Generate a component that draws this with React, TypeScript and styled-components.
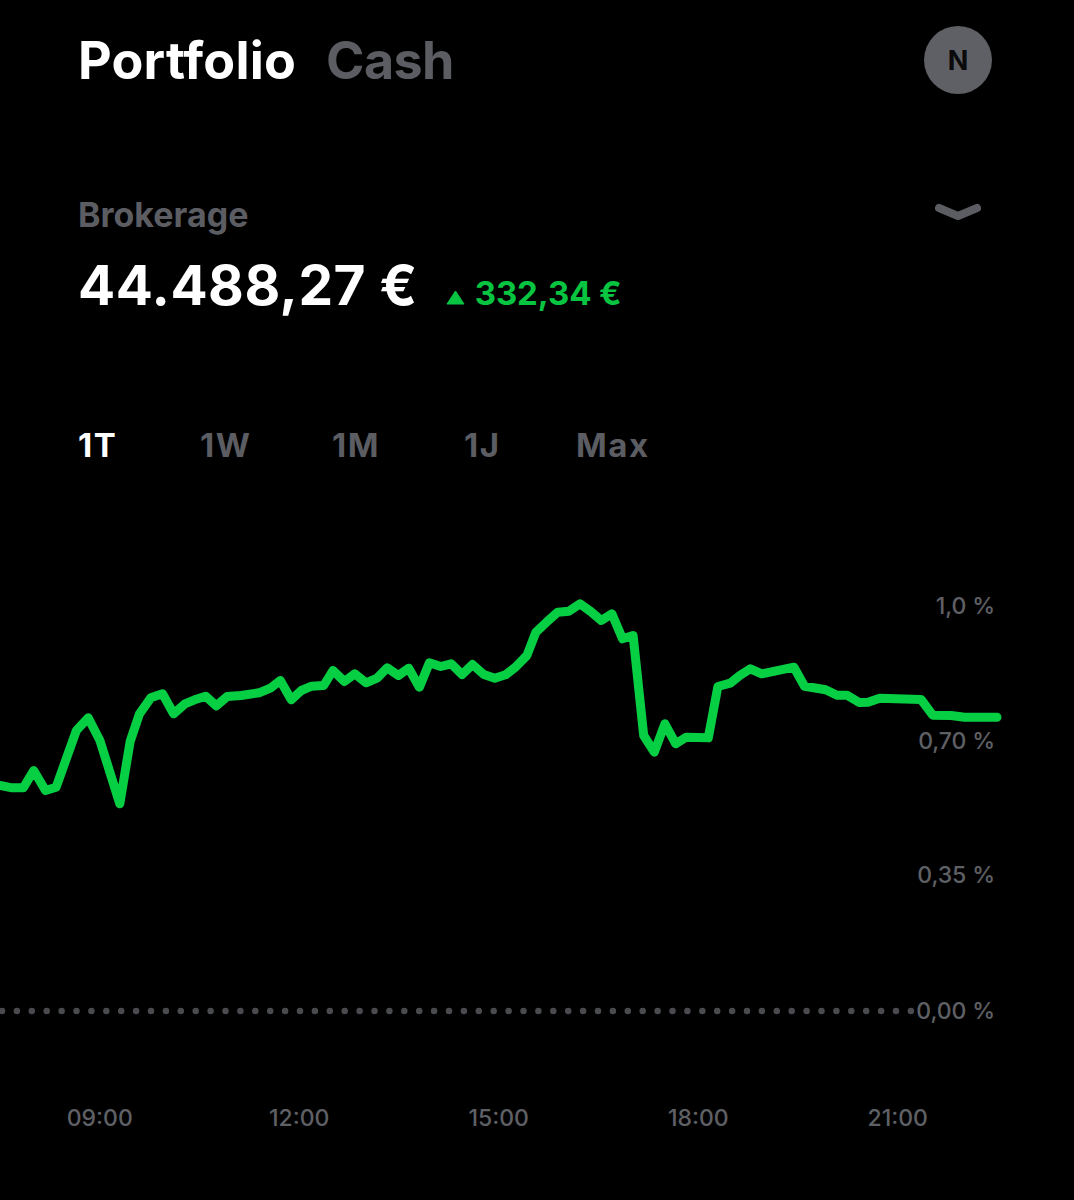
import React from "react";
import styled, { createGlobalStyle } from "styled-components";

const Global = createGlobalStyle`
  html, body { margin: 0; padding: 0; background: #000; }
  body { font-family: Inter, "Liberation Sans", sans-serif; }
`;

const Page = styled.div`
  width: 1074px;
  height: 1200px;
  background: #000;
  overflow: hidden;
  display: flex;
  flex-direction: column;
`;
const Header = styled.header`
  display: flex;
  align-items: center;
  justify-content: space-between;
  padding: 26px 82px 0 78px;
  height: 68px;
`;
const Tabs = styled.nav`
  display: flex;
  gap: 30px;
  align-items: center;
`;
const Tab = styled.span<{ $active?: boolean }>`
  font-size: 52px;
  font-weight: 700;
  letter-spacing: ${(p) => (p.$active ? "0.2px" : "-0.6px")};
  color: ${(p) => (p.$active ? "#fff" : "#5b5d63")};
`;
const Avatar = styled.div`
  width: 68px;
  height: 68px;
  border-radius: 50%;
  background: #5f6065;
  color: #0a0a0c;
  display: flex;
  align-items: center;
  justify-content: center;
  font-size: 27px;
  font-weight: 700;
`;
const Account = styled.section`
  margin-top: 102px;
  padding: 0 82px 0 78px;
`;
const AccountTop = styled.div`
  display: flex;
  justify-content: space-between;
  align-items: flex-start;
  height: 38px;
`;
const AccountName = styled.span`
  font-size: 34px;
  font-weight: 700;
  line-height: 38px;
  color: #5b5d63;
`;
const Chevron = styled.svg`
  width: 46px;
  height: 20px;
  margin-right: 11px;
  margin-top: 7px;
`;
const ValueRow = styled.div`
  display: flex;
  align-items: baseline;
  margin-top: 18px;
`;
const Value = styled.span`
  font-size: 55px;
  font-weight: 700;
  color: #fff;
  letter-spacing: 0.5px;
`;
const Delta = styled.span`
  margin-left: 28px;
  display: inline-flex;
  align-items: baseline;
  gap: 10px;
  font-size: 33px;
  font-weight: 700;
  letter-spacing: -0.1px;
  color: #07c541;
`;
const Triangle = styled.svg`
  width: 19px;
  height: 15px;
`;
const Ranges = styled.div`
  margin-top: 108px;
  padding-left: 78px;
  display: grid;
  grid-template-columns: 122px 132px 132px 112px auto;
`;
const Range = styled.span<{ $active?: boolean }>`
  font-size: 33px;
  font-weight: 700;
  line-height: 38px;
  letter-spacing: 1.5px;
  color: ${(p) => (p.$active ? "#fff" : "#5b5d63")};
`;
const Chart = styled.div`
  position: relative;
  margin-top: 107px;
  height: 490px;
`;
const Plot = styled.svg`
  position: absolute;
  inset: 0;
  width: 1074px;
  height: 490px;
`;
const AxisLabel = styled.span<{ $top: number }>`
  position: absolute;
  right: 79px;
  top: ${(p) => p.$top}px;
  font-size: 23px;
  font-weight: 500;
  letter-spacing: -0.1px;
  line-height: 28px;
  color: #5f6065;
  background: ${(p) => (p.$top > 400 ? "#000" : "transparent")};
`;
const TimeAxis = styled.div`
  display: grid;
  grid-template-columns: repeat(5, 199.5px);
  margin-top: 43px;
`;
const TimeLabel = styled.span`
  text-align: center;
  font-size: 23px;
  font-weight: 500;
  line-height: 28px;
  color: #5f6065;
`;

const left: [number, number][] = [
  [0,615],[35,622],[68,622],[98,570],[132,630],[163,620],[222,450],[256,412],[290,480],[348,670],[378,482],[405,400],[438,352],[472,340],[504,400],[537,370],[565,358],[597,347],[628,376],[660,348],[700,345],[752,337],[785,323],[814,300],[846,358],[875,330],[905,317],[940,315],[967,270],[1000,303],[1030,280],[1063,307],[1095,293],[1124,262],[1157,285],[1187,263],[1218,320],[1247,247],[1280,258],[1310,250],[1342,282],[1372,252],[1405,282],[1437,293],[1468,283],[1497,260],[1530,225],
];
const right: [number, number][] = [
  [45,155],[75,125],[107,95],[138,92],[170,70],[200,93],[230,120],[260,100],[290,175],[320,165],[350,465],[380,515],[410,430],[441,490],[470,470],[533,472],[560,318],[595,308],[622,285],[652,265],[684,280],[775,260],[805,317],[865,328],[897,344],[925,344],[960,366],[985,365],[1018,353],[1135,357],[1168,404],[1220,405],[1258,410],[1350,410],
];
const CHART_TOP = 570.5;
const line = [
  ...left.map(([x, y]) => [x / 2.904, 580 + y / 3 - CHART_TOP]),
  ...right.map(([x, y]) => [520 + x / 2.83, 580 + y / 3 - CHART_TOP]),
]
  .map(([x, y]) => `${x.toFixed(1)},${y.toFixed(1)}`)
  .join(" ");

export default function App() {
  return (
    <Page>
      <Global />
      <Header>
        <Tabs>
          <Tab $active>Portfolio</Tab>
          <Tab>Cash</Tab>
        </Tabs>
        <Avatar>N</Avatar>
      </Header>
      <Account>
        <AccountTop>
          <AccountName>Brokerage</AccountName>
          <Chevron viewBox="0 0 46 20">
            <path d="M4 5 L23 13 L42 5" fill="none" stroke="#5b5d63" strokeWidth="8" strokeLinecap="round" strokeLinejoin="round" />
          </Chevron>
        </AccountTop>
        <ValueRow>
          <Value>44.488,27 €</Value>
          <Delta>
            <Triangle viewBox="0 0 19 15">
              <path d="M9.5 1 L18 14 L1 14 Z" fill="#07c541" stroke="#07c541" strokeLinejoin="round" />
            </Triangle>
            332,34 €
          </Delta>
        </ValueRow>
      </Account>
      <Ranges>
        <Range $active>1T</Range>
        <Range>1W</Range>
        <Range>1M</Range>
        <Range>1J</Range>
        <Range>Max</Range>
      </Ranges>
      <Chart>
        <Plot viewBox="0 0 1074 490">
          <line x1="2" y1="440" x2="940" y2="440" stroke="#4a4b4f" strokeWidth="6.5" strokeLinecap="round" strokeDasharray="0 14.9" />
          <polyline points={line} fill="none" stroke="#07cf43" strokeWidth="9" strokeLinejoin="round" strokeLinecap="round" />
        </Plot>
        <AxisLabel $top={21}>1,0 %</AxisLabel>
        <AxisLabel $top={156}>0,70 %</AxisLabel>
        <AxisLabel $top={290}>0,35 %</AxisLabel>
        <AxisLabel $top={426}>0,00 %</AxisLabel>
      </Chart>
      <TimeAxis>
        <TimeLabel>09:00</TimeLabel>
        <TimeLabel>12:00</TimeLabel>
        <TimeLabel>15:00</TimeLabel>
        <TimeLabel>18:00</TimeLabel>
        <TimeLabel>21:00</TimeLabel>
      </TimeAxis>
    </Page>
  );
}
